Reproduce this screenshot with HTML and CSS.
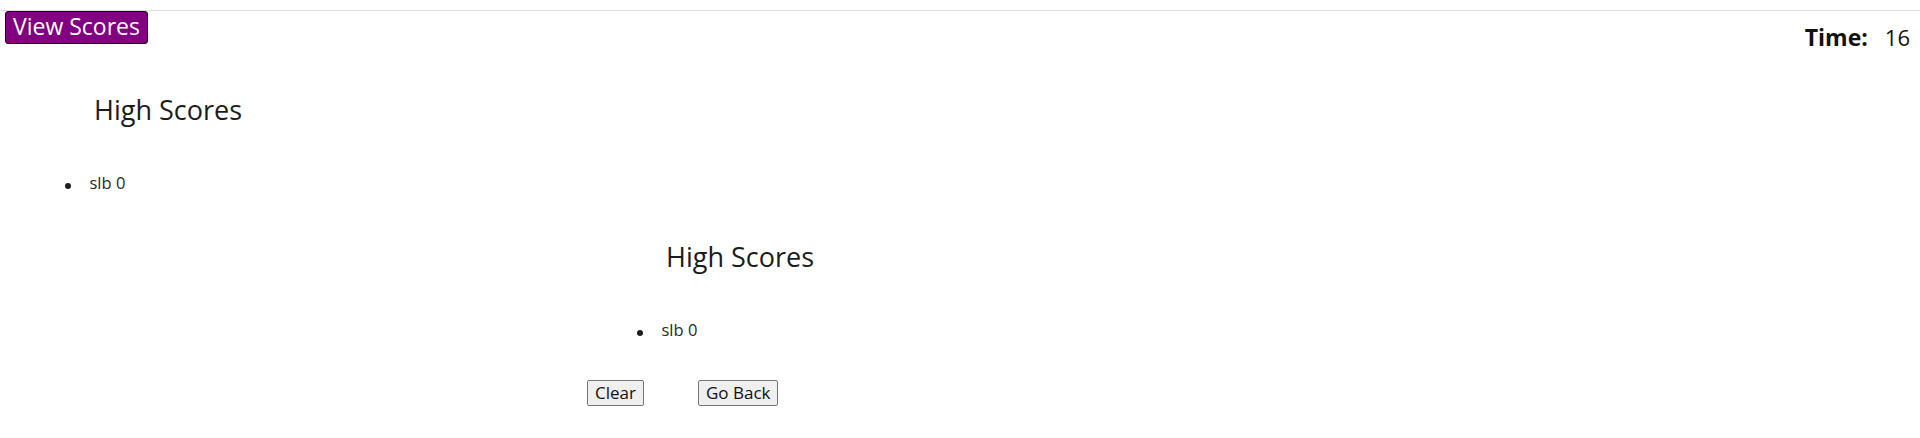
FILE: index.html
```html
<!DOCTYPE html>
<html lang="en">
<head>
<meta charset="utf-8">
<title>High Scores</title>
<link rel="stylesheet" href="styles.css">
</head>
<body>
  <header class="topbar">
    <button class="view-scores" type="button">View Scores</button>
    <div class="timer">
      <span class="timer-label">Time:</span>
      <span class="timer-value">16</span>
    </div>
  </header>
  <main class="content">
    <section class="scores">
      <h2 class="scores-title">High Scores</h2>
      <ul class="scores-list">
        <li class="scores-item">slb 0</li>
      </ul>
    </section>
    <section class="scores scores-final">
      <h2 class="scores-title">High Scores</h2>
      <ul class="scores-list">
        <li class="scores-item">slb 0</li>
      </ul>
      <div class="actions">
        <button class="action-btn" type="button">Clear</button>
        <button class="action-btn" type="button">Go Back</button>
      </div>
    </section>
  </main>
</body>
</html>
```

FILE: styles.css
```css
* {
  box-sizing: border-box;
}

html, body {
  background: #ffffff;
}

body {
  margin: 0;
  padding-top: 10px;
  font-family: "Open Sans", "Noto Sans", sans-serif;
  color: #212121;
}

.topbar {
  display: flex;
  justify-content: space-between;
  align-items: flex-start;
  height: 34px;
  border-top: 1px solid #dddddd;
  padding: 0 10px 0 5px;
}

.view-scores {
  height: 33px;
  margin: 0;
  padding: 0 7px 2px;
  font-family: inherit;
  font-size: 23px;
  line-height: 29px;
  color: #ffffff;
  background: #800080;
  border: 1px solid #111111;
  border-radius: 3px;
}

.timer {
  display: flex;
  margin-top: 16px;
  font-size: 22px;
  line-height: 20px;
  color: #111111;
}

.timer-label {
  font-weight: 700;
  font-size: 23px;
  margin-right: 17px;
}

.content {
  display: flex;
  flex-direction: column;
  align-items: flex-start;
  padding: 49px 0 0 15px;
}

.scores {
  display: flex;
  flex-direction: column;
  align-items: flex-start;
}

.scores-final {
  margin-left: 572px;
  margin-top: 47px;
}

.scores-title {
  margin: 0 0 0 79px;
  font-size: 27px;
  line-height: 34px;
  font-weight: 400;
  color: #1c1c1c;
}

.scores-list {
  list-style: none;
  margin: 46px 0 0;
  padding: 0 0 0 50px;
}

.scores-item {
  display: flex;
  align-items: flex-start;
  font-size: 16.5px;
  line-height: 20px;
  color: #2a2a2a;
}

.scores-item::before {
  content: "";
  width: 6px;
  height: 6px;
  margin: 9.5px 19px 0 -0.5px;
  border-radius: 50%;
  background: #1e1e1e;
}

.actions {
  display: flex;
  gap: 54px;
  margin-top: 40px;
}

.action-btn {
  height: 26px;
  margin: 0;
  padding: 0 7px;
  font-family: inherit;
  font-size: 17px;
  line-height: 24px;
  color: #111111;
  background: #efefef;
  border: 1px solid #767676;
  border-radius: 2px;
}
```
